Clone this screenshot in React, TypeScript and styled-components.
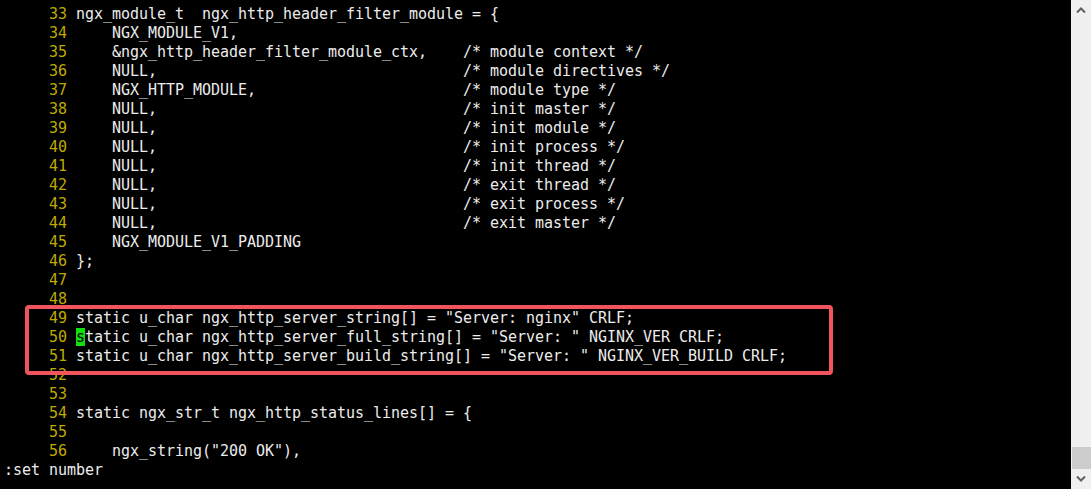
import React from "react";
import styled, { createGlobalStyle } from "styled-components";

const Global = createGlobalStyle`
  html, body { margin: 0; padding: 0; background: #000; }
  body { width: 1091px; height: 489px; overflow: hidden; }
`;

const Terminal = styled.div`
  display: flex;
  width: 1091px;
  height: 489px;
  background: #000;
`;

const Screen = styled.div`
  position: relative;
  flex: 1;
  display: flex;
  flex-direction: column;
  padding: 5px 0 0 4px;
  font-family: "DejaVu Sans Mono", "Liberation Mono", monospace;
  font-size: 15px;
  letter-spacing: -0.03px;
  line-height: 19px;
  color: #ececec;
`;

const Row = styled.div`
  display: flex;
  white-space: pre;
  height: 19px;
`;

const LineNo = styled.span`
  width: 72px;
  text-align: right;
  padding-right: 9px;
  box-sizing: border-box;
  color: #bfaa00;
`;

const Code = styled.span`
  white-space: pre;
`;

const Cursor = styled.span`
  background: #10e010;
  color: #000;
`;

const Command = styled.div`
  white-space: pre;
  height: 19px;
`;

const Highlight = styled.div`
  position: absolute;
  left: 25px;
  top: 305px;
  width: 808px;
  height: 70px;
  box-sizing: border-box;
  border: 4px solid #f2545b;
  border-radius: 4px;
  pointer-events: none;
`;

const ScrollBar = styled.div`
  width: 20px;
  background: #f0f0f0;
  display: flex;
  flex-direction: column;
  align-items: stretch;
`;

const Arrow = styled.div`
  height: 20px;
  display: flex;
  align-items: center;
  justify-content: center;
`;

const Track = styled.div`
  flex: 1;
  display: flex;
  flex-direction: column;
  justify-content: flex-end;
  padding-left: 1px;
`;

const Thumb = styled.div`
  height: 22px;
  background: #cdcdcd;
`;

const lines: [number, string][] = [
  [33, "ngx_module_t  ngx_http_header_filter_module = {"],
  [34, "    NGX_MODULE_V1,"],
  [35, "    &ngx_http_header_filter_module_ctx,    /* module context */"],
  [36, "    NULL,                                  /* module directives */"],
  [37, "    NGX_HTTP_MODULE,                       /* module type */"],
  [38, "    NULL,                                  /* init master */"],
  [39, "    NULL,                                  /* init module */"],
  [40, "    NULL,                                  /* init process */"],
  [41, "    NULL,                                  /* init thread */"],
  [42, "    NULL,                                  /* exit thread */"],
  [43, "    NULL,                                  /* exit process */"],
  [44, "    NULL,                                  /* exit master */"],
  [45, "    NGX_MODULE_V1_PADDING"],
  [46, "};"],
  [47, ""],
  [48, ""],
  [49, 'static u_char ngx_http_server_string[] = "Server: nginx" CRLF;'],
  [50, 'static u_char ngx_http_server_full_string[] = "Server: " NGINX_VER CRLF;'],
  [51, 'static u_char ngx_http_server_build_string[] = "Server: " NGINX_VER_BUILD CRLF;'],
  [52, ""],
  [53, ""],
  [54, "static ngx_str_t ngx_http_status_lines[] = {"],
  [55, ""],
  [56, '    ngx_string("200 OK"),'],
];

const UpIcon = () => (
  <svg width="10" height="6" viewBox="0 0 10 6">
    <path d="M1 5.5 L5 1.5 L9 5.5" fill="none" stroke="#606060" strokeWidth="2" />
  </svg>
);

const DownIcon = () => (
  <svg width="10" height="6" viewBox="0 0 10 6">
    <path d="M1 0.5 L5 4.5 L9 0.5" fill="none" stroke="#606060" strokeWidth="2" />
  </svg>
);

export default function App() {
  return (
    <>
      <Global />
      <Terminal>
        <Screen>
          {lines.map(([n, text]) => (
            <Row key={n}>
              <LineNo>{n}</LineNo>
              {n === 50 ? (
                <Code>
                  <Cursor>{text[0]}</Cursor>
                  {text.slice(1)}
                </Code>
              ) : (
                <Code>{text}</Code>
              )}
            </Row>
          ))}
          <Command>:set number</Command>
          <Highlight />
        </Screen>
        <ScrollBar>
          <Arrow>
            <UpIcon />
          </Arrow>
          <Track>
            <Thumb />
          </Track>
          <Arrow>
            <DownIcon />
          </Arrow>
        </ScrollBar>
      </Terminal>
    </>
  );
}
